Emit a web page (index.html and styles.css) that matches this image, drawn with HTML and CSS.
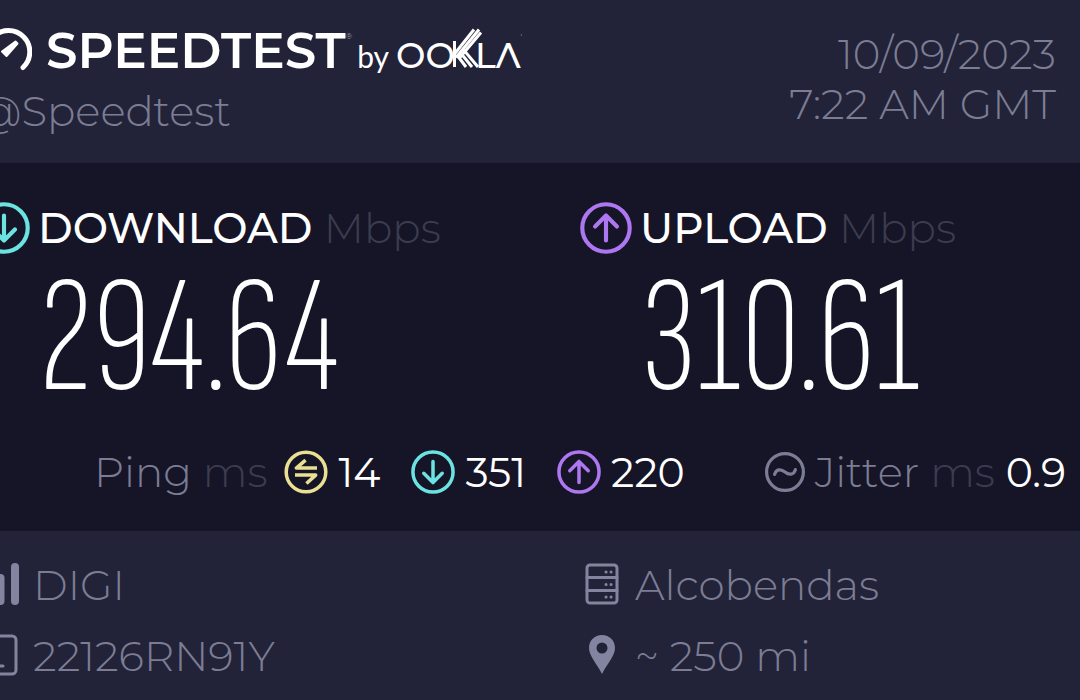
FILE: index.html
```html
<!DOCTYPE html>
<html lang="en">
<head>
<meta charset="utf-8">
<meta name="viewport" content="width=device-width, initial-scale=1">
<title>Speedtest result</title>
<link rel="stylesheet" href="styles.css">
</head>
<body>
<svg class="defs" aria-hidden="true">
  <symbol id="down" viewBox="0 0 50 50">
    <circle cx="25" cy="25" r="22.800"/><path d="M25 13v23M14.500 26.500L25 37l10.500-10.500"/>
  </symbol>
  <symbol id="up" viewBox="0 0 50 50">
    <circle cx="25" cy="25" r="22.800"/><path d="M25 37V14M14.500 23.500L25 13l10.500 10.500"/>
  </symbol>
</svg>
<div class="result">
  <header class="header">
    <div>
      <h1 class="brand">
        <svg class="gauge" viewBox="0 0 54 50" aria-hidden="true">
          <path d="M16 41.500A21.300 21.300 0 1 1 45 41.500"/><path class="needle" d="M37.500 15.500L39.500 17.500L28.500 30L24 25.500Z"/>
        </svg>
        <span class="brand-name">SPEEDTEST</span><span class="mark">®</span>
        <span class="by">by</span>
        <span class="ookla">OO</span>
        <svg class="kay" viewBox="0 0 32 40" aria-hidden="true">
          <path d="M2.500 13v26M2.500 26L22 1.500M4 29.500L27 1.500M7.500 30L29 4.500M5 27l9 12M7.500 23.500L20 39M10.500 20.500L26 39"/>
        </svg>
        <span class="ookla after-kay">LΛ</span><span class="mark">'</span>
      </h1>
      <p class="line">@Speedtest</p>
    </div>
    <div class="stamp">
      <p class="line">10/09/2023</p>
      <p class="line">7:22 AM GMT</p>
    </div>
  </header>

  <main class="main">
    <div class="speeds">
      <section>
        <h2 class="label"><svg class="ring down"><use href="#down"/></svg><span>DOWNLOAD <span class="unit">Mbps</span></span></h2>
        <p class="speed">294.64</p>
      </section>
      <section>
        <h2 class="label"><svg class="ring up"><use href="#up"/></svg><span>UPLOAD <span class="unit">Mbps</span></span></h2>
        <p class="speed">310.61</p>
      </section>
    </div>
    <div class="latency">
      <p class="line">Ping <span class="unit">ms</span></p>
      <p class="line value">
        <svg class="ring small" viewBox="0 0 50 50"><circle cx="25" cy="25" r="22.500"/><path class="swap" d="M37.500 20.500H14L24.500 11.500M12.500 28.500H36L25.500 38"/></svg>14</p>
      <p class="line value"><svg class="ring small down"><use href="#down"/></svg>351</p>
      <p class="line value"><svg class="ring small up"><use href="#up"/></svg>220</p>
      <p class="line value jitter">
        <svg class="ring tiny" viewBox="0 0 50 50"><circle cx="25" cy="25" r="23"/><path d="M12 28c2-7 8-7 13-3s11 4 13-3"/></svg><span><span class="muted">Jitter <span class="unit">ms</span></span> 0.9</span></p>
    </div>
  </main>

  <footer class="footer">
    <p class="line info">
      <svg class="icon" viewBox="0 0 44 44" aria-hidden="true"><path class="bars" d="M5 33v5M14 23v15M22.500 15v23M37 4v34"/></svg>DIGI</p>
    <p class="line info">
      <svg class="icon" viewBox="0 0 44 44" aria-hidden="true"><rect x="7" y="2" width="30" height="38" rx="3"/><path d="M7 14.500h30M7 27.500h30"/><path class="dots" d="M26 9h.1M31 9h.1M26 21.500h.1M31 21.500h.1M26 34h.1M31 34h.1"/></svg>Alcobendas</p>
    <p class="line info">
      <svg class="icon" viewBox="0 0 44 44" aria-hidden="true"><rect x="11" y="2" width="27" height="38" rx="4"/><path d="M20 32h5"/></svg>22126RN91Y</p>
    <p class="line info">
      <svg class="icon" viewBox="0 0 44 44" aria-hidden="true"><path class="pin" fill-rule="evenodd" d="M22 1C14.500 1 9 6.500 9 14C9 22 17 30 22 40C27 30 35 22 35 14C35 6.500 29.500 1 22 1ZM22 8.500a5.500 5.500 0 1 1 0 11a5.500 5.500 0 1 1 0-11Z"/></svg>~ 250 mi</p>
  </footer>
</div>
</body>
</html>
```
FILE: styles.css
```css
* { box-sizing: border-box; }

body {
  margin: 0;
  background: #222338;
  color: #7c7d94;
  font-family: Montserrat, Inter, sans-serif;
  overflow-x: hidden;
}

h1, h2, p { margin: 0; }
.defs { display: none; }

/* The card bleeds past the left side of the window. */
.header > div:first-child, .speeds, .footer { margin-left: -22px; }

.line {
  font-size: 42px;
  font-weight: 300;
  line-height: 50px;
  white-space: nowrap;
}

.header {
  display: flex;
  justify-content: space-between;
  padding: 26px 24px 27px 0;
}

.brand {
  display: flex;
  align-items: baseline;
  height: 50px;
  margin-bottom: 10px;
  color: #fff;
  font-size: 50px;
  font-weight: 600;
  line-height: 50px;
}
.gauge {
  width: 54px;
  height: 50px;
  margin-right: 14px;
  align-self: center;
  fill: none;
  stroke: #fff;
  stroke-width: 5;
  stroke-linecap: round;
  stroke-linejoin: round;
}
.gauge .needle { fill: #fff; stroke-width: 2; }
.mark {
  align-self: flex-start;
  color: #a0a0b0;
  font-size: 8px;
  font-weight: 400;
  line-height: 20px;
}
.by {
  margin: 0 7px 0 5px;
  font-family: Lato, sans-serif;
  font-size: 30px;
  font-weight: 400;
}
.ookla { font-size: 35px; font-weight: 500; }
.kay {
  width: 32px;
  height: 40px;
  margin-left: -3px;
  fill: none;
  stroke: #fff;
  stroke-width: 3;
}
.after-kay { margin-left: -9px; }

.stamp { padding-top: 3px; text-align: right; }

.main {
  padding: 40px 0 34px;
  background: #151527;
  color: #fff;
}
.speeds, .footer {
  display: grid;
  grid-template-columns: 602fr 500fr;
}
.label {
  display: flex;
  align-items: center;
  gap: 8px;
  font-size: 42px;
  font-weight: 500;
  line-height: 50px;
  white-space: nowrap;
}
.unit { color: #3c3c50; font-weight: 300; }

.ring {
  flex: none;
  width: 52px;
  height: 52px;
  margin: -1px 0;
  fill: none;
  stroke: #e9e093;
  stroke-width: 4;
  stroke-linecap: round;
  stroke-linejoin: round;
}
.swap { stroke-linecap: butt; }
.down { stroke: #6be3e0; }
.up { stroke: #ae76f0; }
.small { width: 44px; height: 44px; }
.tiny { width: 40px; height: 40px; stroke: #7c7d94; }

.speed {
  padding: 17px 0 0 61px;
  font-family: "Sofia Sans Extra Condensed", "Barlow Condensed", "Roboto Condensed", sans-serif;
  font-size: 166px;
  font-weight: 200;
  line-height: 140px;
}

.latency {
  display: flex;
  gap: 31px;
  padding: 37px 14px 0 94px;
}
.latency > .line:first-child { margin-right: -14px; color: #7c7d94; }
.value {
  display: flex;
  align-items: center;
  gap: 10px;
  color: #fff;
  font-size: 41px;
  font-weight: 400;
}
.muted { color: #7c7d94; font-size: 42px; font-weight: 300; }
.jitter { margin-left: auto; }

.footer {
  row-gap: 21px;
  padding: 29px 0 19px;
}
.info {
  display: flex;
  align-items: center;
  gap: 11px;
}
.icon {
  width: 44px;
  height: 44px;
  fill: none;
  stroke: #8385a0;
  stroke-width: 3;
  stroke-linecap: round;
}
.bars { stroke-width: 8; }
.pin { fill: #8385a0; stroke: none; }
```
